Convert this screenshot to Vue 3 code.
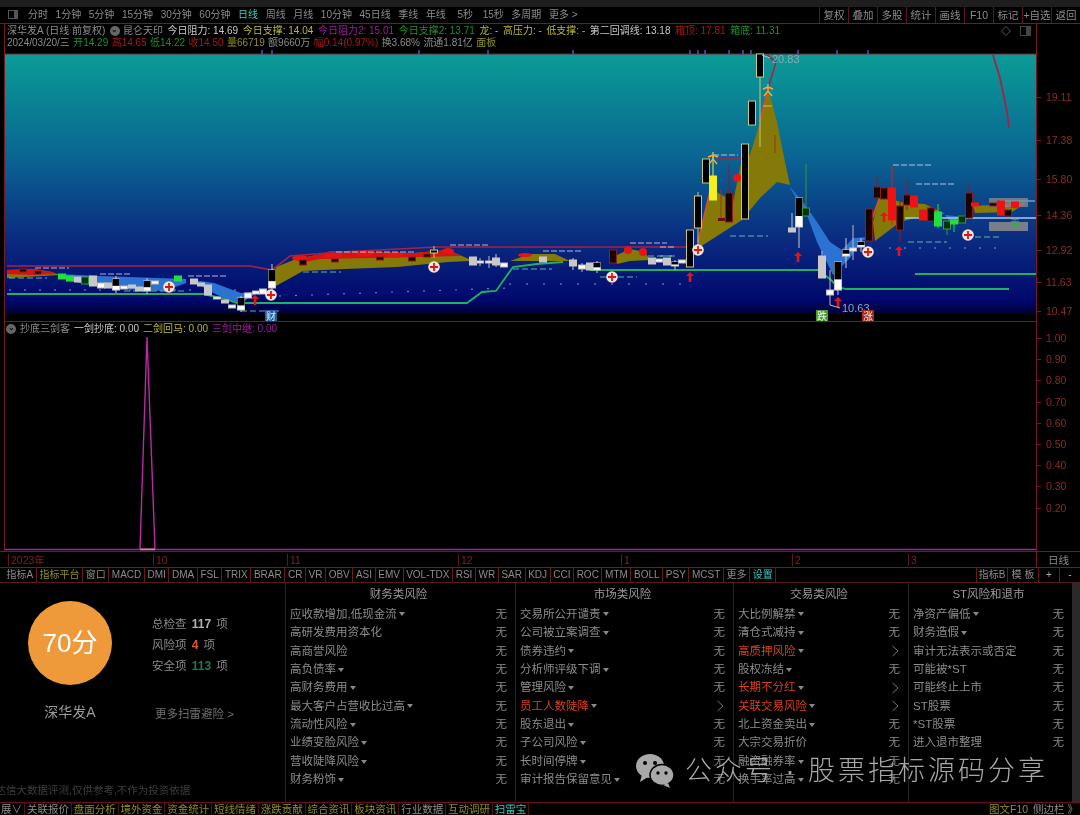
<script setup>
const periods = ['分时', '1分钟', '5分钟', '15分钟', '30分钟', '60分钟', '日线', '周线', '月线', '10分钟', '45日线', '季线', '年线', '5秒', '15秒', '多周期', '更多 >']
const tools = ['复权', '叠加', '多股', '统计', '画线', 'F10', '标记', '+自选', '返回']

const infoTop = [
	{ text: '深华发A (日线 前复权)', cls: 'dim' },
	{ text: '昆仑天印', cls: 'dim', mark: true },
	{ text: '今日阻力: 14.69', cls: 'light' },
	{ text: '今日支撑: 14.04', cls: 'yellow' },
	{ text: '今日阻力2: 15.01', cls: 'purple' },
	{ text: '今日支撑2: 13.71', cls: 'green' },
	{ text: '龙: -', cls: 'yellow' },
	{ text: '高压力: -', cls: 'yellow' },
	{ text: '低支撑: -', cls: 'yellow' },
	{ text: '第二回调线: 13.18', cls: 'light' },
	{ text: '箱顶: 17.81', cls: 'red' },
	{ text: '箱底: 11.31', cls: 'green' },
]
const infoBottom = [
	{ text: '2024/03/20/三', cls: 'dim' },
	{ text: '开14.29', cls: 'green' },
	{ text: '高14.65', cls: 'red' },
	{ text: '低14.22', cls: 'green' },
	{ text: '收14.50', cls: 'red' },
	{ text: '量66719', cls: 'olive' },
	{ text: '额9660万', cls: 'dim' },
	{ text: '幅0.14(0.97%)', cls: 'red' },
	{ text: '换3.68%', cls: 'dim' },
	{ text: '流通1.81亿', cls: 'dim' },
	{ text: '面板', cls: 'olive' },
]

const kinds = {
	up: { fill: '#000', stroke: '#c9c77a' },
	dn: { fill: '#1a0000', stroke: '#8a1f1f' },
	gd: { fill: '#06300e', stroke: '#2f9a45' },
	gray: { fill: '#c8c8c8', stroke: '#c8c8c8' },
	white: { fill: '#fff', stroke: '#bbb' },
	red: { fill: '#ee1212', stroke: '#ee1212' },
	green: { fill: '#1fe03c', stroke: '#1fe03c' },
	yellow: { fill: '#f2f01e', stroke: '#f2f01e' },
	split: { fill: '#fff', stroke: '#ccc' },
}

// x, top, bottom, kind, wick top, wick bottom
const rawCandles = [
	[23, 269, 272, 'dn'], [38, 271, 274, 'dn'],
	[62, 274, 279, 'green'], [70, 276, 281, 'green'], [78, 277, 282, 'gray'], [85, 277, 284, 'gd'], [93, 276, 286, 'gray'],
	[101, 283, 288, 'white'], [108, 283, 288, 'gray'], [116, 279, 290, 'split', 276, 293], [124, 286, 289, 'white'], [132, 285, 288, 'gray'],
	[139, 287, 291, 'gray'], [147, 281, 291, 'split', 278, 294], [155, 281, 284, 'white'],
	[178, 276, 281, 'green'], [194, 279, 284, 'gray'], [201, 283, 286, 'gray'], [208, 285, 295, 'gray'], [217, 297, 299, 'white'],
	[225, 300, 303, 'gray'], [232, 305, 308, 'white'], [241, 298, 310, 'split', 296, 312], [248, 293, 298, 'white'], [256, 291, 294, 'white'],
	[263, 289, 294, 'white'], [272, 270, 288, 'split', 264, 290],
	[303, 260, 265, 'dn'], [335, 259, 262, 'dn'], [380, 257, 260, 'dn'], [412, 257, 261, 'dn'], [427, 254, 257, 'dn'], [434, 250, 253, 'up', 246, 258],
	[473, 257, 265, 'gray'], [480, 261, 263, 'white', 258, 266], [489, 261, 263, 'white', 256, 268], [496, 258, 265, 'gray', 254, 267], [504, 263, 267, 'white'],
	[543, 257, 262, 'gray'], [573, 260, 266, 'gray', 258, 270], [582, 265, 269, 'white', 263, 272], [590, 263, 270, 'gray'], [597, 263, 270, 'split', 261, 273],
	[613, 250, 263, 'dn'], [652, 258, 264, 'gray'], [659, 259, 262, 'white'], [667, 258, 265, 'gray'], [675, 262, 266, 'split', 260, 270], [682, 260, 263, 'white'],
	[690, 230, 267, 'up'], [698, 196, 228, 'up', 192, 245], [706, 159, 183, 'up'], [713, 176, 200, 'yellow', 155, 176], [729, 193, 222, 'dn', 165, 193],
	[745, 144, 219, 'up'], [752, 101, 125, 'up'], [760, 54, 77, 'up', 54, 147],
	[792, 228, 232, 'gray', 213, 232], [799, 198, 227, 'split', 198, 248], [806, 208, 216, 'gd', 164, 208], [822, 256, 278, 'gray', 251, 278],
	[830, 290, 295, 'white', 270, 305], [838, 262, 290, 'split', 262, 295], [846, 250, 256, 'split', 238, 268], [853, 248, 251, 'white', 225, 260], [861, 242, 247, 'split', 238, 252],
	[869, 209, 241, 'dn'], [877, 187, 198, 'dn', 175, 198], [884, 188, 199, 'dn'], [892, 188, 220, 'red', 165, 225], [900, 206, 230, 'dn', 200, 242],
	[907, 195, 205, 'dn', 180, 210], [914, 196, 207, 'red'], [923, 210, 220, 'red'], [931, 208, 221, 'dn', 204, 222], [938, 212, 226, 'green', 204, 228],
	[947, 221, 229, 'gd', 221, 235], [954, 220, 224, 'green', 220, 232], [962, 216, 223, 'gd'], [969, 193, 218, 'dn', 184, 220],
	[975, 203, 206, 'red'], [993, 203, 206, 'dn'], [1001, 201, 215, 'red'], [1008, 210, 216, 'dn'], [1015, 202, 207, 'red'],
]
const candles = rawCandles.map(([x, top, bottom, kind, wickTop, wickBottom]) => ({
	x, top, bottom, kind, wickTop, wickBottom,
	...kinds[kind],
	h: bottom - top,
	mid: top + (bottom - top) * 0.62,
}))

const olive = [
	'698,242 710,192 717,192 733,202 742,158 750,155 760,122 768,88 777,122 785,162 790,185 777,182 760,198 742,220 700,247',
	'276,267 296,259 327,253 362,252 414,253 448,250 469,259 469,261 448,262 397,267 345,269 303,271 276,286',
	'7,270 34,269 52,272 60,275 7,278',
	'510,261 530,254 555,254 570,261',
	'617,255 630,249 645,252 650,260 630,261 617,264',
	'873,222 880,196 905,203 925,204 945,214 930,214 900,222 875,241',
	'973,206 1010,204 1026,203 1012,212 975,213',
]
const blue = [
	'790,187 803,202 817,222 830,242 842,250 853,238 870,237 860,242 850,258 833,275 817,242 807,215 790,188',
	'59,274 100,276 186,279 186,283 165,291 120,289 95,286 70,281',
	'193,280 214,283 241,293 262,291 248,298 241,305 224,298 207,290',
	'945,215 975,218 960,220 950,222',
]
const redPatches = [
	'7,270 34,269 52,272 57,274 30,275 7,274',
	'296,259 327,253 362,252 414,253 448,250 462,256 420,257 370,258 320,259 300,263',
]
const redBlobs = [
	[300, 258, 8, 3], [333, 255, 9, 4], [365, 254, 8, 3], [395, 255, 8, 3], [448, 251, 6, 3],
	[525, 255, 7, 2], [628, 250, 4, 4], [643, 252, 4, 4], [1015, 205, 8, 3],
]
const orange = ['698,242 710,192', '760,122 768,90', '871,222 880,197']
const crimson = [
	{ pts: '7,266 250,266 272,270 290,256 340,252 437,247 688,247', width: 1.6 },
	{ pts: '767,55 776,62 767,92', width: 1.6 },
	{ pts: '717,158 742,158', width: 1.6 },
	{ pts: '993,55 1000,78 1007,112 1009,128', width: 1.8 },
]
const greenLines = [
	'7,294 203,294 222,298 237,303 467,303 482,292 496,291 513,267 537,264 563,262',
	'590,270 818,270 830,279 838,287 846,289 1009,289',
	'915,274 1036,274',
]
const whiteDashes = [
	[35, 268, 34], [100, 274, 31], [188, 276, 38], [336, 252, 78], [450, 245, 40], [543, 251, 39], [630, 243, 37],
	[713, 155, 25], [660, 247, 15], [893, 165, 40], [916, 184, 40],
]
const greenDashes = [
	[9, 278, 38], [124, 291, 62], [241, 311, 38], [303, 272, 38], [513, 269, 39], [600, 277, 37], [648, 256, 27],
	[660, 256, 15], [730, 236, 38], [908, 242, 39], [975, 237, 25],
]
const dots = []
for (let x = 10; x < 240; x += 15) dots.push([x, 290])
for (let x = 280; x < 520; x += 16) dots.push([x, 296 - (x - 280) * 0.035])
for (let x = 510; x < 690; x += 17) dots.push([x, 284])
for (let x = 890; x < 1010; x += 15) dots.push([x, 248])
const topTicks = [262, 272, 419, 488, 573, 690, 698, 705, 729, 743, 751, 798, 837, 868]
const circles = [[169, 287], [271, 295], [434, 267], [612, 277], [698, 250], [868, 252], [968, 235]]
const arrows = [[255, 300], [690, 277], [798, 257], [838, 302], [899, 251], [884, 217]]
const figures = [[713, 158], [768, 90]]
const badges = [
	{ x: 271, text: '财', fill: '#1f5f9f', color: '#d9eeff' },
	{ x: 822, text: '跌', fill: '#4a9a30', color: '#e8ffe0' },
	{ x: 868, text: '涨', fill: '#9a2a20', color: '#ffe0d8' },
]

const priceAxis = [
	[97, '19.11'], [140, '17.38'], [179, '15.80'], [215, '14.36'], [250, '12.92'], [282, '11.63'], [311, '10.47'],
	[338, '1.00'], [359, '0.90'], [380, '0.80'], [402, '0.70'], [423, '0.60'], [444, '0.50'], [465, '0.40'], [486, '0.30'], [508, '0.20'],
]
const months = [[8, '2023年'], [153, '10'], [287, '11'], [458, '12'], [621, '1'], [792, '2'], [908, '3']]

const indicators = [
	{ t: '指标A' }, { t: '指标平台', cls: 'olive' }, { t: '窗口' }, { t: 'MACD' }, { t: 'DMI' }, { t: 'DMA' }, { t: 'FSL' }, { t: 'TRIX' }, { t: 'BRAR' },
	{ t: 'CR' }, { t: 'VR' }, { t: 'OBV' }, { t: 'ASI' }, { t: 'EMV' }, { t: 'VOL-TDX' }, { t: 'RSI' }, { t: 'WR' }, { t: 'SAR' }, { t: 'KDJ' }, { t: 'CCI' },
	{ t: 'ROC' }, { t: 'MTM' }, { t: 'BOLL' }, { t: 'PSY' }, { t: 'MCST' }, { t: '更多' }, { t: '设置', cls: 'cyan' },
]

const stats = [
	{ label: '总检查', value: '117', cls: 'total' },
	{ label: '风险项', value: '4', cls: 'risk' },
	{ label: '安全项', value: '113', cls: 'safe' },
]

const columns = [
	{
		title: '财务类风险',
		rows: [
			{ n: '应收款增加,低现金流', d: 1 }, { n: '高研发费用资本化' }, { n: '高商誉风险' }, { n: '高负债率', d: 1 }, { n: '高财务费用', d: 1 },
			{ n: '最大客户占营收比过高', d: 1 }, { n: '流动性风险', d: 1 }, { n: '业绩变脸风险', d: 1 }, { n: '营收陡降风险', d: 1 }, { n: '财务粉饰', d: 1 },
		],
	},
	{
		title: '市场类风险',
		rows: [
			{ n: '交易所公开谴责', d: 1 }, { n: '公司被立案调查', d: 1 }, { n: '债券违约', d: 1 }, { n: '分析师评级下调', d: 1 }, { n: '管理风险', d: 1 },
			{ n: '员工人数陡降', d: 1, hit: 1 }, { n: '股东退出', d: 1 }, { n: '子公司风险', d: 1 }, { n: '长时间停牌', d: 1 }, { n: '审计报告保留意见', d: 1 },
		],
	},
	{
		title: '交易类风险',
		rows: [
			{ n: '大比例解禁', d: 1 }, { n: '清仓式减持', d: 1 }, { n: '高质押风险', d: 1, hit: 1 }, { n: '股权冻结', d: 1 }, { n: '长期不分红', d: 1, hit: 1 },
			{ n: '关联交易风险', d: 1, hit: 1 }, { n: '北上资金卖出', d: 1 }, { n: '大宗交易折价' }, { n: '融资融券率', d: 1 }, { n: '换手率过高', d: 1 },
		],
	},
	{
		title: 'ST风险和退市',
		rows: [
			{ n: '净资产偏低', d: 1 }, { n: '财务造假', d: 1 }, { n: '审计无法表示或否定' }, { n: '可能被*ST' }, { n: '可能终止上市' },
			{ n: 'ST股票' }, { n: '*ST股票' }, { n: '进入退市整理' },
		],
	},
]

const bottomTabs = [
	{ t: '关联报价' }, { t: '盘面分析', cls: 'olive' }, { t: '境外资金', cls: 'olive' }, { t: '资金统计', cls: 'olive' }, { t: '短线情绪', cls: 'olive' },
	{ t: '涨跌贡献', cls: 'olive' }, { t: '综合资讯', cls: 'olive' }, { t: '板块资讯', cls: 'olive' }, { t: '行业数据' }, { t: '互动调研', cls: 'olive' }, { t: '扫雷宝', cls: 'cyan' },
]
</script>

<template>
	<div class="terminal">
		<div class="strip"></div>

		<header class="toolbar">
			<span class="panel-icon"><i></i></span>
			<nav class="periods">
				<span v-for="p in periods" :key="p" :class="{ active: p === '日线' }">{{ p }}</span>
			</nav>
			<div class="tools">
				<span v-for="t in tools" :key="t">{{ t }}</span>
			</div>
		</header>

		<div class="main">
			<div class="panels">
				<div class="info">
					<div class="info-row top">
						<span v-for="item in infoTop" :key="item.text" :class="item.cls">
							<b v-if="item.mark" class="round-mark">⌄</b>{{ item.text }}
						</span>
						<span class="info-icons">
							<svg width="34" height="12" viewBox="0 0 34 12">
								<path d="M6 1.5 10.5 6 6 10.5 1.5 6Z" fill="none" stroke="#555" />
								<rect x="20" y="1" width="11" height="10" fill="#444" />
								<rect x="21" y="2" width="5" height="8" fill="#000" />
							</svg>
						</span>
					</div>
					<div class="info-row second">
						<span v-for="item in infoBottom" :key="item.text" :class="item.cls">{{ item.text }}</span>
					</div>
				</div>

				<svg class="kline" width="1031" height="271" viewBox="5 50 1031 271">
					<defs>
						<linearGradient id="sky" x1="0" y1="0" x2="0" y2="1">
							<stop offset="0" stop-color="#0a9c96" />
							<stop offset="0.4" stop-color="#0a6492" />
							<stop offset="0.72" stop-color="#0a2a80" />
							<stop offset="0.95" stop-color="#00086c" />
							<stop offset="1" stop-color="#000030" />
						</linearGradient>
					</defs>
					<rect x="5" y="54" width="1031" height="260" fill="url(#sky)" />
					<line x1="5" y1="54" x2="1036" y2="54" stroke="#7a2030" />
					<line v-for="x in topTicks" :key="x" :x1="x" :x2="x" y1="50" y2="54" stroke="#7a3fc0" stroke-width="1.5" />

					<circle v-for="(d, i) in dots" :key="i" :cx="d[0]" :cy="d[1]" r="0.7" fill="#b8c8e8" />
					<polygon v-for="(p, i) in blue" :key="i" :points="p" fill="#2c72d2" />
					<polygon v-for="(p, i) in olive" :key="i" :points="p" fill="#857a08" />
					<polygon v-for="(p, i) in redPatches" :key="i" :points="p" fill="#d81212" />
					<ellipse v-for="(b, i) in redBlobs" :key="i" :cx="b[0]" :cy="b[1]" :rx="b[2]" :ry="b[3]" fill="#e81414" />

					<polyline v-for="(p, i) in greenLines" :key="i" :points="p" fill="none" stroke="#22b060" stroke-width="1.8" />
					<polyline v-for="(c, i) in crimson" :key="i" :points="c.pts" fill="none" stroke="#a02548" :stroke-width="c.width" />
					<polyline v-for="(p, i) in orange" :key="i" :points="p" fill="none" stroke="#c8581c" stroke-width="2" />
					<line x1="905" y1="218" x2="1036" y2="218" stroke="#a8c8f0" stroke-width="1.5" />
					<line x1="1000" y1="201" x2="1035" y2="201" stroke="#a8c8f0" />
					<rect x="989" y="198" width="39" height="9" fill="#8c8c8c" opacity="0.75" />
					<rect x="989" y="222" width="39" height="9" fill="#8c8c8c" opacity="0.85" />
					<line x1="721" y1="190" x2="721" y2="219" stroke="#a03010" />
					<rect x="718" y="218" width="7" height="3" fill="#700f0f" />
					<line x1="775" y1="135" x2="775" y2="153" stroke="#a03010" />
					<circle cx="737" cy="178" r="4" fill="#ee1212" />

					<g v-for="c in candles" :key="c.x">
						<line v-if="c.wickTop" :x1="c.x" :x2="c.x" :y1="c.wickTop" :y2="c.wickBottom" :stroke="c.stroke" />
						<rect :x="c.x - 3.5" :y="c.top" width="7" :height="c.h" :fill="c.fill" :stroke="c.stroke" />
						<rect v-if="c.kind === 'split'" :x="c.x - 3.5" :y="c.top" width="7" :height="c.mid - c.top" fill="#000" />
					</g>

					<line v-for="d in whiteDashes" :key="d[0]" :x1="d[0]" :x2="d[0] + d[2]" :y1="d[1]" :y2="d[1]" stroke="#e8d8f0" stroke-dasharray="6 2" opacity="0.8" />
					<line v-for="d in greenDashes" :key="d[0]" :x1="d[0]" :x2="d[0] + d[2]" :y1="d[1]" :y2="d[1]" stroke="#78d8a8" stroke-dasharray="6 3" opacity="0.8" />

					<g v-for="c in circles" :key="c[0]" :transform="`translate(${c[0]} ${c[1]})`">
						<circle r="5.8" fill="#f4e4d8" />
						<path d="M-4 0H4M0-4V4" stroke="#d81818" stroke-width="1.8" />
					</g>
					<path v-for="a in arrows" :key="a[0]" :transform="`translate(${a[0]} ${a[1]})`" d="M0-5 4-1H1.3V5H-1.3V-1H-4Z" fill="#e81414" />
					<path v-for="f in figures" :key="f[0]" :transform="`translate(${f[0]} ${f[1]})`" d="M0-6V1M-4 6 0 1 4 6M-5-1 0-3 5-1" fill="none" stroke="#f0b040" stroke-width="1.4" />
					<line x1="763" y1="106" x2="772" y2="106" stroke="#f0b040" />

					<text class="peak" x="772" y="63">20.83</text>
					<text class="peak" x="842" y="312">10.63</text>
					<line x1="762" y1="55" x2="770" y2="58" stroke="#b0c8d8" />
					<line x1="830" y1="305" x2="840" y2="308" stroke="#b0c8d8" />

					<g v-for="b in badges" :key="b.x">
						<rect :x="b.x - 6" y="310" width="12" height="11" :fill="b.fill" />
						<text class="badge" :x="b.x" y="319.5" :fill="b.color">{{ b.text }}</text>
					</g>
					<text class="trade" x="1015" y="227">卖</text>
				</svg>

				<div class="sub-head">
					<span class="round-mark">⌄</span>
					<span class="dim">抄底三剑客</span>
					<span class="light">一剑抄底: 0.00</span>
					<span class="yellow">二剑回马: 0.00</span>
					<span class="purple">三剑中继: 0.00</span>
				</div>

				<svg class="sub" width="1031" height="215" viewBox="5 337 1031 215">
					<polygon points="140,550 147,338 155,550" fill="none" stroke="#b82aa8" stroke-width="1.4" />
					<line x1="5" y1="550.5" x2="1036" y2="550.5" stroke="#9c2a9c" stroke-width="1.5" />
					<line x1="140" y1="550.5" x2="155" y2="550.5" stroke="#b0a860" stroke-width="1.5" />
				</svg>
			</div>

			<aside class="axis">
				<span v-for="a in priceAxis" :key="a[1]" class="tick" :style="{ top: `${a[0] - 30}px` }">{{ a[1] }}</span>
			</aside>
		</div>

		<div class="datebar">
			<span v-for="m in months" :key="m[1]" class="month" :style="{ left: `${m[0]}px` }">{{ m[1] }}</span>
			<span class="period-cell">日线</span>
		</div>

		<div class="tabs">
			<span v-for="i in indicators" :key="i.t" :class="i.cls">{{ i.t }}</span>
			<span class="tabs-right">
				<span>指标B</span><span>模 板</span><span class="pm">+</span><span class="pm">-</span>
			</span>
		</div>

		<section class="scan">
			<div class="score">
				<div class="score-main">
					<div class="ball">70分</div>
					<div class="stock">深华发A</div>
				</div>
				<div class="score-side">
					<div v-for="s in stats" :key="s.label" class="stat">
						{{ s.label }} <b :class="s.cls">{{ s.value }}</b> 项
					</div>
					<div class="more">更多扫雷避险 &gt;</div>
				</div>
				<div class="note">通达信大数据评测,仅供参考,不作为投资依据</div>
			</div>

			<div v-for="col in columns" :key="col.title" class="risk-col">
				<h4>{{ col.title }}</h4>
				<div v-for="row in col.rows" :key="row.n" class="risk-row">
					<span :class="{ hit: row.hit }">{{ row.n }}</span>
					<em v-if="row.d" class="drop"></em>
					<svg v-if="row.hit" class="go" width="9" height="12" viewBox="0 0 9 12"><path d="M1.5 1 7 6 1.5 11" fill="none" stroke="#777" /></svg>
					<span v-else class="none">无</span>
				</div>
			</div>
			<div class="scrollbar"></div>

			<div class="watermark">
				<svg width="40" height="36" viewBox="0 0 40 36">
					<ellipse cx="15" cy="13" rx="14" ry="12" fill="#a8a8a8" />
					<path d="M7 21 5 29 13 24Z" fill="#a8a8a8" />
					<ellipse cx="27" cy="22" rx="12" ry="10.5" fill="#a8a8a8" stroke="#000" stroke-width="1.5" />
					<path d="M33 30 35 35 28 32Z" fill="#a8a8a8" />
					<circle cx="10" cy="10" r="2" fill="#000" />
					<circle cx="20" cy="10" r="2" fill="#000" />
					<circle cx="23" cy="20" r="1.7" fill="#000" />
					<circle cx="31" cy="20" r="1.7" fill="#000" />
				</svg>
				<span>公众号 · 股票指标源码分享</span>
			</div>
		</section>

		<footer class="bottom">
			<span class="first">展∨</span>
			<span v-for="b in bottomTabs" :key="b.t" :class="b.cls">{{ b.t }}</span>
			<span class="bottom-right"><span class="olive">图文F10</span><span>侧边栏 》</span></span>
		</footer>
	</div>
</template>

<style scoped>
.terminal {
	position: relative;
	display: flex;
	flex-direction: column;
	width: 1080px;
	height: 815px;
	overflow: hidden;
	background: #000;
	color: #8c8c8c;
	font-family: "Liberation Sans", "Noto Sans CJK SC", sans-serif;
	font-size: 10.5px;
	line-height: 1;
	filter: blur(0.35px);
}

.strip {
	height: 7px;
	background: #1e1e1e;
}

.toolbar {
	display: flex;
	align-items: center;
	height: 16px;
	border-bottom: 1px solid #7a1822;
	box-sizing: content-box;
}

.panel-icon {
	display: block;
	width: 10px;
	height: 9px;
	margin-left: 8px;
	background: #555;
}

.panel-icon i {
	display: block;
	width: 5px;
	height: 7px;
	margin: 1px;
	background: #000;
}

.periods {
	display: flex;
	gap: 7.6px;
	margin-left: 10px;
	font-size: 10px;
	white-space: nowrap;
}

.periods span:nth-child(14) {
	margin-left: 4px;
}

.periods span:nth-child(15) {
	margin-left: 2px;
}

.periods .active {
	color: #4ec8c0;
}

.tools {
	display: flex;
	height: 16px;
	margin-left: auto;
}

.tools span {
	display: flex;
	align-items: center;
	justify-content: center;
	width: 28px;
	border-left: 1px solid #5a1820;
	white-space: nowrap;
}

.main {
	display: flex;
	height: 528px;
	border-bottom: 1px solid #7a1822;
}

.panels {
	display: flex;
	flex-direction: column;
	width: 1031px;
	margin-left: 4px;
	border-left: 1px solid #7a1822;
	border-right: 1px solid #7a1822;
}

.info {
	display: flex;
	flex-direction: column;
	gap: 1px;
	height: 26px;
	padding-top: 2px;
	box-sizing: border-box;
	font-size: 10px;
}

.info-row {
	display: flex;
	align-items: center;
	height: 11px;
	padding-left: 2px;
	white-space: nowrap;
}

.info-row.top {
	gap: 4.6px;
}

.info-row.second {
	gap: 3.4px;
}

.info-row.top > span {
	display: flex;
	align-items: center;
}

.info-icons {
	margin-left: auto;
	padding-right: 2px;
}

.dim {
	color: #8c8c8c;
}

.light {
	color: #c8c8c8;
}

.yellow {
	color: #b8b832;
}

.purple {
	color: #9a1f9a;
}

.green {
	color: #1f8f2f;
}

.red {
	color: #a81818;
}

.olive {
	color: #8f8f1f;
}

.cyan {
	color: #3ac8c0;
}

.round-mark {
	display: inline-block;
	width: 10px;
	height: 10px;
	margin-right: 3px;
	border-radius: 50%;
	background: #666;
	color: #111;
	font-size: 8px;
	font-weight: 700;
	line-height: 7px;
	text-align: center;
}

.kline {
	display: block;
	height: 271px;
	flex: none;
	border-bottom: 1px solid #7a1822;
}

.peak {
	fill: #8fa8b8;
	font-size: 11px;
}

.badge {
	font-size: 10px;
	text-anchor: middle;
}

.trade {
	fill: #30b040;
	font-size: 10px;
	text-anchor: middle;
}

.sub-head {
	display: flex;
	align-items: center;
	gap: 4px;
	height: 14px;
	padding-left: 1px;
	font-size: 10px;
	white-space: nowrap;
}

.sub-head .round-mark {
	margin-right: 0;
}

.sub {
	display: block;
	flex: none;
}

.axis {
	position: relative;
	flex: 1;
}

.tick {
	position: absolute;
	left: 9px;
	color: #8f2a2a;
	font-size: 10.5px;
	line-height: 12px;
}

.tick::before {
	content: '';
	position: absolute;
	top: 6px;
	left: -9px;
	width: 4px;
	height: 1px;
	background: #7a1822;
}

.datebar {
	position: relative;
	height: 15px;
	border-bottom: 1px solid #7a1822;
}

.month {
	position: absolute;
	top: 2px;
	padding-left: 2px;
	border-left: 1px solid #5a1820;
	color: #7a2424;
	font-size: 10.5px;
	line-height: 12px;
}

.period-cell {
	position: absolute;
	right: 0;
	top: 0;
	display: flex;
	align-items: center;
	justify-content: center;
	width: 43px;
	height: 15px;
	border-left: 1px solid #7a1822;
}

.tabs {
	display: flex;
	align-items: center;
	height: 14px;
	padding-left: 4px;
	border-bottom: 1px solid #5a1820;
	white-space: nowrap;
	font-size: 10px;
}

.tabs > span:not(.tabs-right) {
	display: flex;
	align-items: center;
	height: 14px;
	padding: 0 2.6px;
	border-right: 1px solid #6a1820;
}

.tabs-right {
	display: flex;
	height: 14px;
	margin-left: auto;
}

.tabs-right span {
	display: flex;
	align-items: center;
	justify-content: center;
	width: 30px;
	border-left: 1px solid #6a1820;
}

.tabs-right .pm {
	width: 20px;
	color: #aaa;
}

.scan {
	position: relative;
	display: grid;
	grid-template-columns: 285px 230px 218px 175px 164px 8px;
	height: 219px;
	border-bottom: 1px solid #6a1020;
}

.score {
	position: relative;
	display: flex;
}

.score-main {
	display: flex;
	flex-direction: column;
	align-items: center;
	width: 152px;
	padding: 18px 12px 0 0;
	box-sizing: border-box;
}

.ball {
	display: flex;
	align-items: center;
	justify-content: center;
	width: 84px;
	height: 84px;
	border-radius: 50%;
	background: #ef9a3a;
	color: #fff;
	font-size: 26px;
}

.stock {
	margin-top: 20px;
	color: #9a9a9a;
	font-size: 14px;
}

.score-side {
	display: flex;
	flex-direction: column;
	gap: 8px;
	padding-top: 35px;
	font-size: 11.5px;
}

.stat {
	height: 13px;
	white-space: nowrap;
}

.stat b {
	margin: 0 2px;
	font-size: 12px;
}

.stat .total {
	color: #b0b0b0;
}

.stat .risk {
	color: #d85a30;
}

.stat .safe {
	color: #1f7a4a;
}

.more {
	margin-top: 28px;
	margin-left: 3px;
	color: #707070;
	white-space: nowrap;
}

.note {
	position: absolute;
	left: -15px;
	bottom: 7px;
	color: #3e3e3e;
	font-size: 10.5px;
	white-space: nowrap;
}

.risk-col {
	padding: 6px 8px 0 4px;
	border-left: 1px solid #242424;
}

.risk-col h4 {
	margin: 0 0 3px;
	height: 13px;
	color: #9a9a9a;
	font-size: 11.5px;
	font-weight: 400;
	text-align: center;
}

.risk-row {
	display: flex;
	align-items: center;
	height: 18.4px;
	font-size: 11.5px;
	white-space: nowrap;
}

.hit {
	color: #d8401f;
}

.drop {
	width: 0;
	height: 0;
	margin-left: 2px;
	border-left: 3px solid transparent;
	border-right: 3px solid transparent;
	border-top: 4px solid #888;
}

.none,
.go {
	margin-left: auto;
}

.none {
	font-size: 11.5px;
}

.scrollbar {
	background: #2a2a2a;
}

.watermark {
	position: absolute;
	left: 635px;
	top: 170px;
	display: flex;
	align-items: center;
	gap: 10px;
	color: #a8a8a8;
	font-size: 27px;
	font-weight: 300;
	letter-spacing: 3px;
	white-space: nowrap;
}

.bottom {
	display: flex;
	align-items: center;
	height: 12px;
	white-space: nowrap;
}

.bottom > span:not(.bottom-right) {
	display: flex;
	align-items: center;
	height: 12px;
	padding: 0 1.9px;
	border-right: 1px solid #4a1418;
}

.bottom .first {
	width: 33px;
	margin-left: -8px;
	box-sizing: border-box;
	padding-left: 0;
	justify-content: flex-end;
}

.bottom-right {
	display: flex;
	gap: 5px;
	margin-left: auto;
	padding-right: 2px;
}
</style>

<style>
html,
body {
	margin: 0;
	background: #000;
}
</style>
